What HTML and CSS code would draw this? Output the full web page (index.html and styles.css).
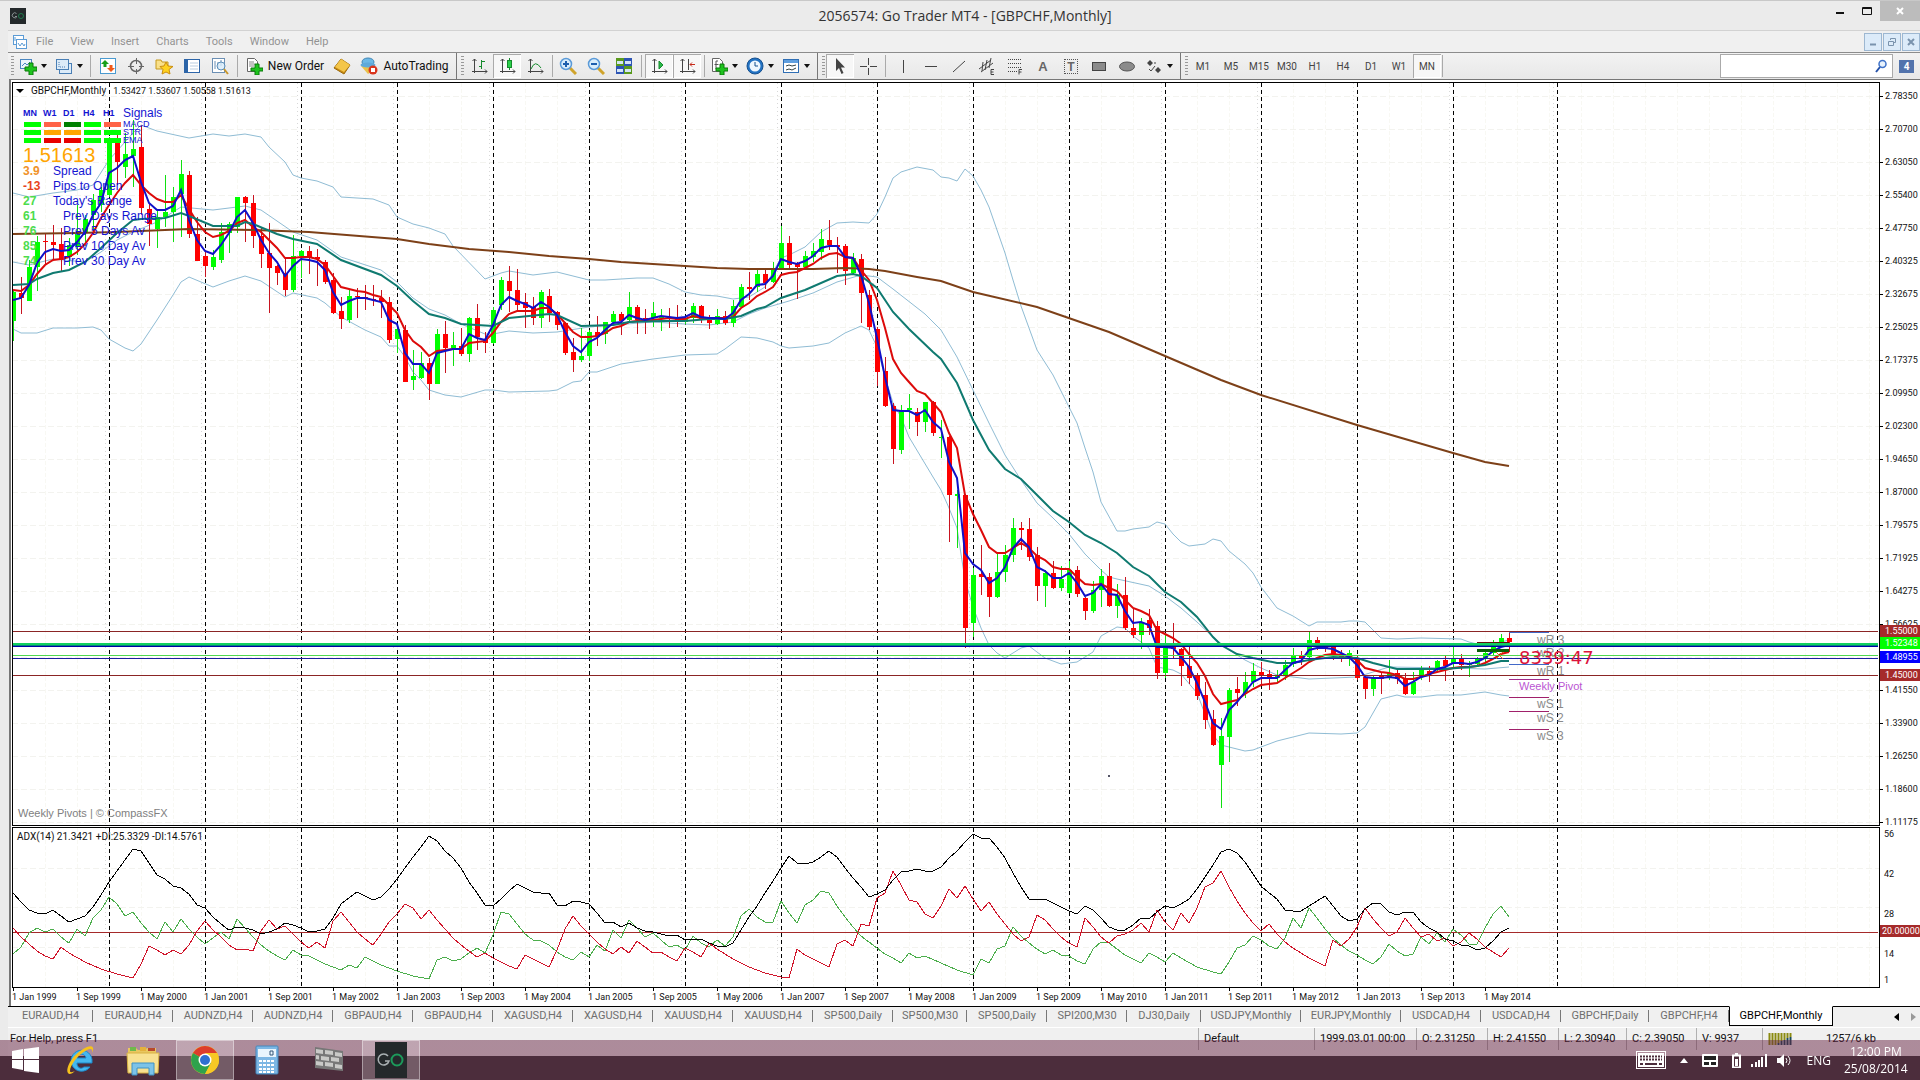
FILE: index.html
```html
<!DOCTYPE html>
<html lang="en">
<head>
<meta charset="utf-8">
<title>2056574: Go Trader MT4 - [GBPCHF,Monthly]</title>
<link rel="stylesheet" href="styles.css">
</head>
<body>
<div class="window">
  <header class="titlebar">
    <svg class="app-icon" width="16" height="16" viewBox="0 0 16 16"><rect width="16" height="16" fill="#24292b"/><path d="M6.500 5.500a2.500 2.500 0 1 0 .5 3H5" fill="none" stroke="#8a9294"/><circle cx="11" cy="8" r="2.500" fill="none" stroke="#1f7a4c"/></svg>
    <h1>2056574: Go Trader MT4 - [GBPCHF,Monthly]</h1>
    <div class="win-buttons">
      <button aria-label="Minimize"><svg width="10" height="10"><rect x="1" y="6" width="8" height="2" fill="#111"/></svg></button>
      <button aria-label="Maximize"><svg width="10" height="10"><path d="M.5 1.500h9v7h-9zM.5 2.500h9" fill="none" stroke="#111"/></svg></button>
      <button class="close" aria-label="Close"><svg width="8" height="8"><path d="M1 1l6 6M7 1l-6 6" stroke="#fff" stroke-width="2"/></svg></button>
    </div>
  </header>

  <nav class="menubar">
    <svg width="16" height="16" viewBox="0 0 16 16" fill="#fff" stroke="#5b9bd5"><rect x="1.500" y="1.500" width="10" height="9"/><rect x="4.500" y="5.500" width="10" height="9"/><path d="M6 9l2 3 2-3 2 3 1-2M3 3v4" fill="none"/></svg>
    <a href="#">File</a><a href="#">View</a><a href="#">Insert</a><a href="#">Charts</a><a href="#">Tools</a><a href="#">Window</a><a href="#">Help</a>
    <div class="mdi">
      <button aria-label="Minimize chart"><svg width="10" height="10"><path d="M2 7.500h6" stroke="#7a93ad" stroke-width="2"/></svg></button>
      <button aria-label="Restore chart"><svg width="10" height="10" fill="none" stroke="#7a93ad"><path d="M3.500 3V1.500h5v4H7M1.500 4.500h5v4h-5z"/></svg></button>
      <button aria-label="Close chart"><svg width="10" height="10"><path d="M2 2l6 6M8 2l-6 6" stroke="#7a93ad" stroke-width="2"/></svg></button>
    </div>
  </nav>

  <div class="toolbar">
    <i class="grip"></i>
    <button class="drop" aria-label="New chart"><svg width="18" height="18"><rect x="1.500" y="2.500" width="11" height="9" fill="#eaf3fb" stroke="#4a86c0"/><path d="M3 9l3-3 2 2 3-3" fill="none" stroke="#4a86c0"/><path d="M10 6h4v4h4v4h-4v4h-4v-4H6v-4h4z" fill="#1ec31e" stroke="#0a7a0a"/></svg></button>
    <button class="drop" aria-label="Profiles"><svg width="18" height="18" fill="#dcebf8" stroke="#4a7fb5"><rect x="4.500" y="6.500" width="12" height="10"/><rect x="1.500" y="2.500" width="12" height="10"/><path d="M4 5v5h7" stroke-dasharray="1 1" fill="none"/></svg></button>
    <i class="sep"></i>
    <button aria-label="Market Watch"><svg width="18" height="18"><rect x="1.500" y="1.500" width="15" height="15" fill="#fff" stroke="#4a9ad0"/><path d="M6 3l4 4H7.500v3h-3V7H2z" fill="#1aa01a"/><path d="M12 15l4-4h-2.500V8h-3v3H8z" fill="#f05a1a"/></svg></button>
    <button aria-label="Data Window"><svg width="18" height="18" fill="none" stroke="#666"><circle cx="9" cy="9" r="5.500" stroke-width="1.500"/><path d="M9.500 1v6M9.500 12v5M1 9.500h6M12 9.500h5"/></svg></button>
    <button aria-label="Navigator"><svg width="18" height="18"><path d="M1 3h5l1 2h6v7H1z" fill="#f9e08a" stroke="#c59a1e"/><path d="M11 5l2 4 5 .5-4 3 1 4.500-4-2-4 2 1-4.500-3-3 4-.5z" fill="#ffd21f" stroke="#c98d10"/></svg></button>
    <button aria-label="Terminal"><svg width="18" height="18"><rect x="1.500" y="2.500" width="15" height="13" fill="#fff" stroke="#2d65a8"/><path d="M2 3h3v12H2z" fill="#2d65a8"/><path d="M7 6h8M7 9h8M7 12h8" stroke="#b9cde0"/></svg></button>
    <button aria-label="Strategy Tester"><svg width="18" height="18"><rect x="1.500" y="1.500" width="12" height="14" fill="#fff" stroke="#6b8fb4"/><path d="M4 4v8M7 5v6M10 3v6" stroke="#6b8fb4"/><circle cx="10" cy="9" r="4" fill="#d7ebfa" fill-opacity=".8" stroke="#5a8db8"/><path d="M13 12l4 5" stroke="#c9962a" stroke-width="2"/></svg></button>
    <i class="sep"></i>
    <button class="labelled"><svg width="18" height="18"><path d="M2.500 1.500h7l3 3v10h-10z" fill="#fff" stroke="#666"/><path d="M4 5h5M4 7h6M4 9h5" stroke="#888"/><path d="M10 7h4v4h4v3h-4v4h-4v-4H6v-3h4z" fill="#1ec31e" stroke="#0a7a0a"/></svg>New Order</button>
    <button aria-label="MetaEditor"><svg width="18" height="18"><path d="M1 11l7-9 9 6-6 9z" fill="#c88a12" stroke="#9b6a0c"/><path d="M2 10l6-8 9 6-6 7z" fill="#f4c64a"/></svg></button>
    <button class="labelled auto"><svg width="18" height="18"><ellipse cx="8" cy="5" rx="6" ry="4" fill="#6cb8e6" stroke="#3f86b5"/><path d="M1 9l7 8 7-5-2-5z" fill="#e9c14b"/><ellipse cx="8" cy="8" rx="7.500" ry="2.500" fill="#5ea9da"/><circle cx="13" cy="13" r="4.500" fill="#d9351d"/><rect x="11" y="11" width="4" height="4" fill="#fff"/></svg>AutoTrading</button>
    <i class="sep edge"></i><i class="grip"></i>
    <button aria-label="Bar Chart"><svg width="18" height="18" fill="none" stroke="#444"><path d="M4.500 2v14M2 14.500h15M2.500 4l2-2 2 2M15 12.500l2 2-2 2"/><path d="M11.500 3v9M9 9.500h2M12 4.500h3" stroke="#158a2c"/></svg></button>
    <button class="pressed" aria-label="Candlesticks"><svg width="18" height="18" fill="none" stroke="#444"><path d="M4.500 2v14M2 14.500h15M2.500 4l2-2 2 2M15 12.500l2 2-2 2"/><path d="M11.500 1v12" stroke="#158a2c"/><rect x="9.500" y="3.500" width="4" height="7" fill="#2ad04a" stroke="#158a2c"/></svg></button>
    <button aria-label="Line Chart"><svg width="18" height="18" fill="none" stroke="#444"><path d="M4.500 2v14M2 14.500h15M2.500 4l2-2 2 2M15 12.500l2 2-2 2"/><path d="M5 12q4-10 10-1" stroke="#158a2c"/></svg></button>
    <i class="sep thin"></i>
    <button aria-label="Zoom In"><svg width="18" height="18"><path d="M11 11l6 6" stroke="#d0a42c" stroke-width="3"/><circle cx="7" cy="7" r="5.500" fill="#d9edfb" stroke="#5a9ad8" stroke-width="1.500"/><path d="M4 7h6M7 4v6" stroke="#1d5fae" stroke-width="2"/></svg></button>
    <button aria-label="Zoom Out"><svg width="18" height="18"><path d="M11 11l6 6" stroke="#d0a42c" stroke-width="3"/><circle cx="7" cy="7" r="5.500" fill="#d9edfb" stroke="#5a9ad8" stroke-width="1.500"/><path d="M4 7h6" stroke="#1d5fae" stroke-width="2"/></svg></button>
    <button aria-label="Tile Windows"><svg width="18" height="18"><path d="M1 1h8v8H1zM9 9h8v8H9z" fill="#5a9a1c"/><path d="M9 1h8v8H9zM1 9h8v8H1z" fill="#2d54b4"/><path d="M2 4h6v3H2zM10 4h6v3h-6zM2 12h6v3H2zM10 12h6v3h-6z" fill="#d5e6f5"/></svg></button>
    <i class="sep"></i>
    <button class="pressed" aria-label="Auto Scroll"><svg width="18" height="18" fill="none" stroke="#444"><path d="M4.500 2v14M2 14.500h15M2.500 4l2-2 2 2M15 12.500l2 2-2 2"/><path d="M9 4l4 4-4 4z" fill="#2ab84a" stroke="#158a2c"/></svg></button>
    <button class="pressed" aria-label="Chart Shift"><svg width="18" height="18" fill="none" stroke="#444"><path d="M4.500 2v14M2 14.500h15M2.500 4l2-2 2 2M15 12.500l2 2-2 2M10.500 2v11"/><path d="M17 7.500h-5m2-2l-2 2 2 2" stroke="#c62a1a"/></svg></button>
    <i class="sep thin"></i>
    <button class="drop" aria-label="Indicators"><svg width="18" height="18"><path d="M2.500 1.500h7l3 3v10h-10z" fill="#fff" stroke="#666"/><path d="M8 4H6v8M4.500 7.500h4" fill="none" stroke="#555"/><path d="M10 7h4v4h4v3h-4v4h-4v-4H6v-3h4z" fill="#1ec31e" stroke="#0a7a0a"/></svg></button>
    <button class="drop" aria-label="Periods"><svg width="18" height="18"><circle cx="9" cy="9" r="8" fill="#2272c3" stroke="#17508e"/><circle cx="9" cy="9" r="5.500" fill="#eef7ff"/><path d="M9 5v4h3" fill="none" stroke="#17508e"/></svg></button>
    <button class="drop" aria-label="Templates"><svg width="18" height="18"><rect x="1.500" y="2.500" width="15" height="13" fill="#fff" stroke="#2f6eb4"/><path d="M2 3h14v3H2z" fill="#5f9fdf"/><path d="M4 9l3-1 3 1 4-1M4 13l3-1 3 1 4-2" fill="none" stroke="#344"/></svg></button>
    <i class="sep edge"></i><i class="grip"></i>
    <button class="pressed" aria-label="Cursor"><svg width="18" height="18"><path d="M5 1v13l3-3 2.500 6 2-1-2.500-5.500h4z" fill="#444"/></svg></button>
    <button aria-label="Crosshair"><svg width="18" height="18"><path d="M9.500 1v7M9.500 11v7M1 9.500h7M11 9.500h7" stroke="#444"/></svg></button>
    <i class="sep"></i>
    <button aria-label="Vertical Line"><svg width="18" height="18"><path d="M9.500 3v13" stroke="#444"/></svg></button>
    <button aria-label="Horizontal Line"><svg width="18" height="18"><path d="M3 9.500h12" stroke="#444"/></svg></button>
    <button aria-label="Trendline"><svg width="18" height="18"><path d="M3 15L15 4" stroke="#444"/></svg></button>
    <button aria-label="Equidistant Channel"><svg width="18" height="18" fill="none" stroke="#444"><path d="M1 12L13 3M3 15l12-9M5 5l-1 9M9 3L7 13M13 1l-2 10"/><path d="M16 12.500h-3v5h3M13 15h2.500"/></svg></button>
    <button aria-label="Fibonacci Retracement"><svg width="18" height="18" fill="none" stroke="#444"><path d="M2 2.500h14M2 6.500h14M2 10.500h14M2 14.500h9" stroke-dasharray="1 1"/><path d="M16 12.500h-3v5M13 15h2.500"/></svg></button>
    <button class="glyph">A</button>
    <button class="glyph boxed"><span>T</span></button>
    <button aria-label="Rectangle"><svg width="18" height="18"><rect x="2.500" y="5.500" width="13" height="8" fill="#8b8b8b" stroke="#444"/></svg></button>
    <button aria-label="Ellipse"><svg width="18" height="18"><ellipse cx="9" cy="9.500" rx="7.500" ry="4.500" fill="#8b8b8b" stroke="#555"/></svg></button>
    <button class="drop" aria-label="Arrows"><svg width="18" height="18" fill="#444"><path d="M5 3l3 3-3 3-3-3zM13 10l3 3-3 3-3-3z"/><path d="M4 12l2 2 4-5M9 6h2" fill="none" stroke="#444"/></svg></button>
    <i class="sep edge"></i><i class="grip"></i>
    <div class="periods"><button>M1</button><button>M5</button><button>M15</button><button>M30</button><button>H1</button><button>H4</button><button>D1</button><button>W1</button><button class="pressed">MN</button></div>
    <i class="sep last"></i>
    <div class="search">
      <input type="text" aria-label="Search">
      <svg width="14" height="14"><path d="M6 8l-4 5" stroke="#2350a8" stroke-width="2"/><circle cx="8.500" cy="5" r="3.500" fill="#e8f2fc" stroke="#3f72c8" stroke-width="1.500"/></svg>
    </div>
    <button class="chat" aria-label="Messages"><span>4</span></button>
  </div>

  <main class="workspace">
    <div class="chart">
      <div class="pane price-pane">
        <svg id="price"></svg>
        <p class="symbol"><i></i><span>GBPCHF,Monthly</span><span class="ohlc">1.53427 1.53607 1.50558 1.51613</span></p>
        <section class="signals">
          <div class="sig-grid">
            <b>MN</b><b>W1</b><b>D1</b><b>H4</b><b>H1</b><span class="sig-title">Signals</span>
            <i class="up"></i><i class="weak"></i><i class="strong"></i><i class="up"></i><i class="weak"></i><span>MACD</span>
            <i class="up"></i><i class="flat"></i><i class="flat"></i><i class="up"></i><i class="up"></i><span>STR</span>
            <i class="up"></i><i class="down"></i><i class="down"></i><i class="up"></i><i class="up"></i><span>EMA</span>
          </div>
          <p class="quote">1.51613</p>
          <dl>
            <div><dt class="c-orange">3.9</dt><dd>Spread</dd></div>
            <div><dt class="c-red">-13</dt><dd>Pips to Open</dd></div>
            <div><dt>27</dt><dd>Today's Range</dd></div>
            <div><dt>61</dt><dd class="in">Prev Days Range</dd></div>
            <div><dt>76</dt><dd class="in">Prev 5 Days Av</dd></div>
            <div><dt>85</dt><dd class="in">Prev 10 Day Av</dd></div>
            <div><dt>74</dt><dd class="in">Prev 30 Day Av</dd></div>
          </dl>
        </section>
        <p class="credit">Weekly Pivots | © CompassFX</p>
      </div>
      <div class="axis price-axis" id="priceAxis">
        <b class="tag brown at-155">1.55000</b><b class="tag lime at-152">1.52348</b><b class="tag blue at-148">1.48955</b><b class="tag brown at-145">1.45000</b>
      </div>
      <div class="pane adx-pane">
        <svg id="adx"></svg>
        <p class="adx-title">ADX(14) 21.3421 +DI:25.3329 -DI:14.5761</p>
      </div>
      <div class="axis adx-axis"><span>56</span><span>42</span><span>28</span><b class="tag brown">20.00000</b><span>14</span><span>1</span></div>
      <div class="dates" id="dates"></div>
    </div>
  </main>

  <nav class="tabs">
    <a href="#" class="first">EURAUD,H4</a><a href="#">EURAUD,H4</a><a href="#">AUDNZD,H4</a><a href="#">AUDNZD,H4</a><a href="#">GBPAUD,H4</a><a href="#">GBPAUD,H4</a><a href="#">XAGUSD,H4</a><a href="#">XAGUSD,H4</a><a href="#">XAUUSD,H4</a><a href="#">XAUUSD,H4</a><a href="#">SP500,Daily</a><a href="#" class="small">SP500,M30</a><a href="#">SP500,Daily</a><a href="#">SPI200,M30</a><a href="#" class="small">DJ30,Daily</a><a href="#" class="wide">USDJPY,Monthly</a><a href="#" class="wide">EURJPY,Monthly</a><a href="#">USDCAD,H4</a><a href="#">USDCAD,H4</a><a href="#" class="mid">GBPCHF,Daily</a><a href="#">GBPCHF,H4</a><a href="#" class="active">GBPCHF,Monthly</a>
    <div class="scroll"><button aria-label="Scroll left"><svg width="5" height="8"><path d="M5 0v8L0 4z"/></svg></button><button aria-label="Scroll right" disabled><svg width="5" height="8"><path d="M0 0v8l5-4z" fill="#999"/></svg></button></div>
  </nav>

  <footer class="status">
    <span class="help">For Help, press F1</span><span>Default</span><span>1999.03.01 00:00</span><span>O: 2.31250</span><span>H: 2.41550</span><span>L: 2.30940</span><span>C: 2.39050</span><span>V: 9937</span>
    <span class="traffic"><svg width="24" height="12"><path d="M1.500 0v12M4.500 0v12M7.500 0v12M10.500 0v10M13.500 0v8M16.500 0v7M19.500 0v5M22.500 0v4" stroke="#8a8a10" stroke-width="2"/><path d="M10.500 10v2M13.500 8v4M16.500 7v5M19.500 5v7M22.500 4v8" stroke="#1c4a5a" stroke-width="2"/></svg>1257/6 kb</span>
  </footer>
</div>

<div class="taskbar">
  <button class="start" aria-label="Start"><svg width="27" height="26" fill="#fff"><path d="M0 4l11-2v10H0zM12 2l15-2v12H12zM0 13h11v10L0 21zM12 13h15v13l-15-2z"/></svg></button>
  <button aria-label="Internet Explorer"><svg width="32" height="32"><path d="M27 18a10.500 10.500 0 1 0-2 5h-6c-4 3-7 0-7-4h15zM12 14c1-5 8-5 9 0z" fill="#45b7ee" stroke="#1d86c8" fill-rule="evenodd"/><path d="M3 29c-3-5 5-20 19-26 5-2 8 0 5 6 1-4-1-5-5-3C12 11 5 22 5 27c0 2 3 1 5 0-3 3-6 4-7 2z" fill="#f6c21c"/></svg></button>
  <button aria-label="File Explorer"><svg width="34" height="32"><path d="M2 4h8l2 2h7l2-2h9v22H2z" fill="#e9c65f"/><path d="M4 3h6v4H4z" fill="#6fb94c"/><path d="M14 3h6v4h-6z" fill="#e4b13c"/><path d="M22 4h7v3h-7z" fill="#b8482c"/><path d="M1 9h32l-1 20H2z" fill="#f8e191" stroke="#d7b244"/><path d="M6 31V19h22v12h-5v-7H11v7z" fill="#7cc3e8" stroke="#3f92c4"/></svg></button>
  <button class="open" aria-label="Google Chrome"><svg width="30" height="30"><circle cx="15" cy="15" r="14" fill="#f7c825"/><path d="M15 15L2.900 8A14 14 0 0 1 27.100 8z" fill="#dd3c2b"/><path d="M2.900 8A14 14 0 0 0 15 29l6-11-6-3z" fill="#2fa24c"/><path d="M15 8h12.100A14 14 0 0 1 15 29l6-11z" fill="#f7c825"/><circle cx="15" cy="15" r="6.500" fill="#fff"/><circle cx="15" cy="15" r="5" fill="#2f6fd0"/></svg></button>
  <button aria-label="Calculator"><svg width="24" height="30"><rect x="1" y="1" width="22" height="28" rx="1" fill="#7db7e4" stroke="#4586bb"/><path d="M3 4h18v8H3z" fill="#e9f5fd"/><path d="M15 6h3v4h-3z" fill="none" stroke="#357"/><path d="M4 16h16M4 20h16M4 24h16M4 27h16" stroke="#fff" stroke-width="2" stroke-dasharray="3 1"/></svg></button>
  <button aria-label="Firewall"><svg width="32" height="28"><path d="M2 1l28 4v20L2 22z" fill="#777"/><path d="M3 3l7 1v4l-7-1zM12 4l8 1v4l-8-1zM22 6l7 1v4l-7-1zM3 9l3 .500v4L3 13zM8 10l8 1v4l-8-1zM18 11l8 1v4l-8-1zM3 15l7 1v4l-7-1zM12 16l8 1v4l-8-1zM22 18l7 1v4l-7-1z" fill="#c9c9c7"/></svg></button>
  <button class="open go" aria-label="Go Trader"><svg width="32" height="36"><rect width="32" height="36" fill="#24292b"/><path d="M13 14a5.500 5.500 0 1 0 1 5h-4" fill="none" stroke="#a9b0b2" stroke-width="1.500"/><circle cx="22" cy="18" r="5.500" fill="none" stroke="#1c9a5b" stroke-width="2"/></svg></button>
  <div class="tray">
    <svg class="keys" width="30" height="18"><rect x=".5" y=".5" width="29" height="17" fill="none" stroke="#fff"/><rect x="2" y="2" width="26" height="14" fill="#fff"/><path d="M4 5.500h22M4 8.500h22" stroke="#4c2d3c" stroke-width="2" stroke-dasharray="2 1"/><path d="M4 13h3M9 13h12M23 13h3" stroke="#4c2d3c" stroke-width="2"/></svg>
    <svg class="keys" width="8" height="5"><path d="M0 5l4-5 4 5z" fill="#fff"/></svg>
    <svg class="keys" width="16" height="13"><rect width="16" height="13" rx="1" fill="#fff"/><path d="M2 2h12v4H2zM2 8h5v3H2zM9 8h5v3H9z" fill="#222"/></svg>
    <svg width="9" height="15"><path d="M1 2.500h7v12H1zM3 1h3" fill="none" stroke="#fff" stroke-width="2"/><path d="M3 6h3v7H3z" fill="#fff"/></svg>
    <svg width="16" height="13" fill="#fff"><path d="M0 10h2v3H0zM4 8h2v5H4zM7 6h2v7H7zM10 3h2v10h-2zM14 0h2v13h-2z"/></svg>
    <svg width="15" height="15"><path d="M0 5h3l4-4v13l-4-4H0z" fill="#fff"/><path d="M9 5q2 2.500 0 5M11 3q4 4.500 0 9" fill="none" stroke="#fff"/></svg>
    <span class="lang">ENG</span>
    <time class="clock"><span>12:00 PM</span><span>25/08/2014</span></time>
  </div>
</div>
<script src="chart.js"></script>
</body>
</html>
```
FILE: styles.css
```css
* { box-sizing: border-box; }
body { margin: 0; background: #ebebeb; font-family: Roboto, "Noto Sans", sans-serif; font-size: 11px; color: #111; overflow: hidden; }
p, h1, dl, dd { margin: 0; }
button { border: 0; padding: 0; background: none; font: inherit; color: inherit; display: flex; align-items: center; justify-content: center; }
a { color: inherit; text-decoration: none; }
svg { display: block; flex: none; }

.window { position: relative; min-height: 100vh; border-top: 1px solid #c8c8c8; }

.titlebar { display: flex; align-items: center; height: 29px; padding-left: 10px; }
.titlebar h1 { flex: 1; text-align: center; font: 400 14px "Open Sans", "Noto Sans", sans-serif; color: #333; padding-left: 78px; }
.win-buttons { display: flex; align-self: flex-start; }
.win-buttons button { width: 27px; height: 20px; }
.win-buttons .close { width: 40px; background: #bcbcbc; justify-content: center; }

.menubar { display: flex; align-items: center; height: 22px; margin-left: 8px; padding-left: 4px; border-top: 1px solid #d2d2d2; background: #f0f0f0; color: #939393; }
.menubar svg + a { margin-left: 8px; }
.menubar a { margin-right: 17px; }
.mdi { display: flex; gap: 1px; margin-left: auto; }
.mdi button { width: 18px; height: 18px; border: 1px solid #9db7d1; background: #dcebf9; }

.toolbar { display: flex; align-items: center; height: 27px; margin-left: 8px; border-top: 1px solid #8c8c8c; background: linear-gradient(#f2f2f2, #e8e8e8); }
.toolbar > button, .periods button { width: 28px; height: 24px; flex: none; }
.toolbar .drop { width: 36px; gap: 4px; }
.drop::after { content: ""; border: 3px solid transparent; border-top: 4px solid #111; border-bottom: 0; }
.toolbar .labelled { width: 87px; gap: 5px; font-size: 12px; }
.toolbar .auto { width: 97px; }
.toolbar .pressed, .periods .pressed { background: #f7f7f7; box-shadow: inset 1px 1px #aaa, inset -1px -1px #fff; }
.grip { width: 7px; height: 20px; flex: none; background: repeating-linear-gradient(#999 0 1px, transparent 1px 3px) 3px 0 / 3px 100% no-repeat; }
.sep { width: 7px; height: 22px; flex: none; background: linear-gradient(#aaa, #aaa) 3px 0 / 1px 100% no-repeat; }
.sep.thin { width: 5px; }
.sep.edge { width: 5px; height: 26px; background-image: linear-gradient(#777, #777); }
.sep.last { width: 3px; background-position: 1px 0; }
.toolbar > .glyph { font: bold 13px "Liberation Sans", sans-serif; color: #666; }
.boxed span { width: 14px; height: 15px; line-height: 14px; border: 1px dotted #555; font-size: 12px; }
.periods { display: flex; font-size: 10px; color: #444; }
.search { display: flex; align-items: center; width: 173px; height: 24px; margin-left: auto; padding-right: 4px; border: 1px solid #aaa; background: #fff; }
.search input { flex: 1; min-width: 0; border: 0; outline: 0; background: none; }
.toolbar .chat { width: 27px; }
.chat span { width: 15px; height: 13px; line-height: 13px; background: #5273ac; color: #fff; font-size: 10px; font-weight: 700; }

.workspace { margin-left: 9px; border-left: 2px solid #777; border-top: 1px solid #777; background: #fff; padding: 2px 0 0 1px; }
.chart { display: grid; grid-template-columns: 1fr 40px; font-size: 9px; line-height: 12px; }
.pane { position: relative; border: 1px solid #000; overflow: hidden; min-width: 0; }
.pane > svg { width: 100%; }
.price-pane { height: 744px; }
.price-pane > svg { height: 742px; }
.adx-pane { height: 161px; margin-top: 1px; }
.adx-pane > svg { height: 159px; }
.symbol, .adx-title, .credit, .signals { position: absolute; }
.symbol { left: 3px; top: 2px; display: flex; gap: 7px; align-items: center; font-size: 10px; }
.symbol i { border: 4px solid transparent; border-top-color: #000; border-bottom: 0; }
.symbol .ohlc { font-size: 9px; }
.adx-title { left: 4px; top: 3px; font-size: 10px; }
.credit { left: 5px; bottom: 5px; font: 11px/14px "Liberation Sans", sans-serif; color: #808080; }

.signals { left: 10px; top: 23px; font-family: "Liberation Sans", sans-serif; font-size: 12px; color: #1414d2; }
.sig-grid { display: grid; grid-template-columns: repeat(5, 20px) auto; grid-template-rows: 14px repeat(3, 8px); align-items: center; justify-items: start; font-size: 9px; line-height: 8px; }
.sig-grid i { width: 17px; height: 5px; margin-left: 1px; }
.sig-grid .sig-title { font-size: 12px; }
.up { background: #0f0; } .weak { background: #ff6347; } .strong { background: #008000; } .flat { background: #ffa500; } .down { background: #e80000; }
.quote { font-size: 20px; line-height: 22px; color: #ffa500; }
.signals dl { margin-top: -2px; }
.signals dl div { display: flex; height: 15px; line-height: 15px; }
.signals dt { width: 30px; font-weight: 700; color: #4ddc4d; }
.signals .c-orange { color: #f0922a; }
.signals .c-red { color: #e8431c; }
.signals .in { padding-left: 10px; }

.axis { position: relative; display: flex; flex-direction: column; }
.axis span { position: relative; flex: none; height: 33px; padding-left: 5px; }
.price-axis { height: 744px; padding-top: 8px; }
.axis span:last-child { height: 12px; }
.price-axis span::before { content: ""; position: absolute; left: 0; top: 6px; width: 3px; border-top: 1px solid #000; }
.tag { position: absolute; left: 0; right: 0; height: 12px; padding-left: 5px; color: #fff; font-weight: 400; }
.brown { background: #a52a2a; } .lime { background: #0f0; } .blue { background: #00f; }
.at-155 { top: 543px; } .at-152 { top: 555px; } .at-148 { top: 569px; } .at-145 { top: 587px; }
.adx-axis { height: 162px; padding-top: 2px; }
.adx-axis span { height: 40px; padding-left: 4px; }
.adx-axis span:nth-of-type(4) { height: 26px; }
.adx-axis .tag { top: 99px; padding-left: 2px; }
.dates { grid-column: 1 / -1; display: flex; height: 18px; overflow: hidden; padding-top: 3px; }
.dates span { position: relative; width: 64px; flex: none; white-space: nowrap; }
.dates span::before { content: ""; position: absolute; left: 1px; top: -3px; height: 3px; border-left: 1px solid #000; }

.tabs { position: relative; display: flex; height: 21px; margin-left: 8px; border-top: 1px solid #000; background: #f0f0f0; color: #6e6e6e; font-size: 11px; line-height: 18px; }
.tabs a { width: 80px; flex: none; text-align: center; white-space: nowrap; background: linear-gradient(#777, #777) right 3px / 1px 12px no-repeat; }
.tabs .first { width: 85px; }
.tabs .small { width: 74px; }
.tabs .mid { width: 88px; }
.tabs .wide { width: 100px; }
.tabs .active { width: 104px; height: 20px; margin-top: -1px; background: #fff; color: #000; border: 1px solid #000; border-top-color: #fff; }
.scroll { display: flex; gap: 12px; margin: 0 4px 0 auto; }

.status { display: grid; grid-template-columns: 1fr 116px 102px 71px 71px 68px 70px 66px 158px; height: 53px; margin-left: 8px; border-top: 1px solid #fff; background: #f0f0f0; line-height: 22px; }
.status span { height: 22px; padding-left: 5px; border-left: 1px solid #b0b0b0; white-space: nowrap; }
.status .help { padding-left: 2px; border: 0; }
.status .traffic { display: flex; gap: 34px; align-items: center; }

.taskbar { position: fixed; left: 0; right: 0; bottom: 0; display: flex; height: 40px; color: #fff; background: linear-gradient(rgba(100, 30, 62, .48) 16px, #4c2d3c 16px); }
.taskbar > button { width: 58px; margin-right: 4px; }
.taskbar > .start { width: 50px; margin-right: 2px; }
.taskbar .open { background: rgba(255, 255, 255, .22); border: 1px solid rgba(255, 255, 255, .4); }
.tray { display: flex; align-items: center; margin-left: auto; gap: 10px; padding-right: 16px; font: 12px "Open Sans", sans-serif; }
.tray .keys { margin-right: 4px; }
.lang { margin: 0 3px 0 5px; }
.clock { display: grid; justify-items: center; line-height: 17px; width: 60px; white-space: nowrap; }
```
FILE: chart.js
```js
// Each bar is 8px wide; the first one sits at x = 13 in window coordinates.
const barX = n => 13 + 8 * n;
const fromList = s => s.trim().split(/\s+/).map((y, n) => [n, +y]);
const fromPairs = s => s.trim().split(/\s+/).map(p => p.split(':').map(Number));
const line = (pts, color, width, extra = '') =>
  `<polyline points="${pts.map(([n, y]) => barX(n) + ',' + y).join(' ')}" fill="none" stroke="${color}" stroke-width="${width}" ${extra}/>`;
const hline = (y, color, width) => `<rect x="12" y="${y}" width="100%" height="${width}" fill="${color}"/>`;

// colour, high, body top, body bottom, low
const candles = `g 290 292 321 341,r 277 293 298 314,g 260 267 301 301,g 236 242 267 291,r 233 241 242 265,r 225 242 245 260,r 228 244 260 272,g 238 245 257 266,g 205 233 247 255,g 215 219 233 246,g 194 200 215 232,g 187 190 205 212,g 137 140 195 197,r 133 143 162 185,g 133 154 167 178,g 120 149 156 187,
r 125 147 208 215,r 203 209 224 246,g 210 217 229 248,g 175 212 217 227,g 187 197 212 242,g 160 174 194 237,r 171 175 234 238,r 217 234 261 261,r 250 256 266 277,g 250 257 267 270,g 223 232 260 263,g 222 224 233 253,g 197 197 227 233,r 196 197 203 242,r 195 203 236 248,r 227 236 254 268,
r 223 253 268 313,r 265 266 273 285,r 257 273 290 296,g 235 256 290 292,g 250 251 256 278,r 246 251 257 274,r 249 257 259 286,r 260 262 282 284,r 273 280 313 314,r 297 311 319 329,g 290 296 320 323,r 288 296 297 318,r 285 297 298 310,r 285 299 300 306,r 290 298 302 318,r 297 302 340 343,
g 325 329 339 353,r 325 330 382 382,g 350 376 380 390,g 352 363 378 379,r 358 363 384 400,g 329 334 384 384,r 321 334 348 373,g 332 345 348 366,r 328 346 354 356,g 317 318 354 362,r 304 318 337 350,r 332 339 343 353,
g 307 310 343 344,g 277 280 305 310,r 266 281 291 312,r 269 290 305 312,r 293 302 308 328,r 297 307 318 325,g 290 292 318 328,r 289 296 313 322,r 311 312 325 330,r 322 323 353 355,r 338 352 360 372,g 328 356 360 362,g 330 332 356 361,r 316 332 337 346,g 322 322 334 344,g 311 314 322 324,
r 312 314 321 335,g 292 307 320 323,r 305 307 320 334,r 309 318 320 334,g 302 313 318 327,g 309 316 318 331,r 308 317 319 328,r 305 318 322 327,g 317 318 322 324,g 303 306 318 323,r 305 306 319 323,r 315 318 323 329,g 309 316 324 325,r 311 316 323 325,g 300 306 323 327,g 284 287 307 308,
r 272 287 289 300,g 270 274 287 292,r 270 274 283 289,g 262 269 282 283,g 226 243 268 270,r 236 243 265 270,r 262 263 267 299,g 251 256 267 270,g 243 251 257 262,g 229 239 252 260,r 220 240 245 250,r 237 245 247 273,r 244 246 271 285,g 253 258 273 274,r 254 259 293 323,r 290 295 327 330,
r 327 329 372 386,r 357 371 406 407,r 403 406 449 464,g 405 410 450 454,g 394 408 410 429,r 408 412 422 436,g 402 402 422 432,r 401 402 433 436,g 420 437 438 458,r 436 437 495 542,g 490 494 496 548,r 494 495 628 648,g 568 575 623 637,r 545 574 577 595,r 573 577 597 617,g 553 572 597 598,
g 545 555 572 582,g 518 528 555 562,r 522 528 530 550,r 518 529 557 561,r 547 555 586 601,g 570 573 586 607,r 561 573 588 589,g 566 579 588 591,g 561 570 593 594,r 566 570 594 597,r 597 598 611 620,g 581 590 611 613,g 569 576 590 607,r 563 576 606 607,g 584 595 606 618,r 577 595 628 630,
r 608 628 635 638,g 618 622 635 649,r 609 620 628 635,r 621 626 673 679,g 635 647 673 678,r 623 645 649 658,r 648 649 666 686,r 645 666 678 684,r 673 676 696 700,r 682 695 720 729,r 710 719 745 746,g 718 736 765 808,g 688 690 737 762,r 677 689 693 706,g 672 682 693 698,g 663 671 682 687,
r 662 672 675 684,r 670 674 678 690,g 670 675 678 683,g 660 665 675 680,g 648 656 664 667,r 651 656 658 665,g 632 640 657 658,r 637 640 643 650,r 643 645 648 652,r 645 646 655 660,r 650 654 658 662,g 650 653 657 666,r 656 658 678 680,r 675 677 689 699,g 675 678 689 696,r 672 676 679 694,
g 660 673 677 680,r 668 673 679 684,r 673 678 694 695,g 672 682 694 695,g 666 670 677 680,r 666 671 674 682,g 660 661 668 671,r 656 660 666 681,g 647 658 663 667,r 654 658 665 670,g 661 663 665 677,g 657 659 664 667,g 650 653 659 662,g 640 645 653 655,g 634 638 642 645,r 632 638 642 652`
  .split(',').map(s => s.trim().split(' '));

const fast = fromList(`300 298 285 263 252 249 251 250 242 232 215 203 173 168 160 156 182 203 210 210 206 190 220 240 251 254 245 233 217 210 223 240 253 262 276 266 259 260 262 270 292 305 301 298 298 300 302 320 324 353 364 364 373 353 351 349 349 334 338 340
325 305 297 301 304 308 302 307 315 332 346 352 342 338 330 323 322 315 318 320 318 316 317 318 317 313 317 318 318 319 313 300 294 285 284 276 259 262 264 261 256 248 246 246 257 258 275 303 338 377 410 411 411 415 410 422 429 462 478 553
564 570 583 578 567 548 539 547 567 571 578 578 573 583 596 593 584 594 595 611 623 622 625 647 647 648 657 667 683 702 723 729 710 702 692 682 678 678 678 670 663 661 650 648 648 649 653 657 665 677 678 678 677 678 686 682 677 675 669 667 663 663 664 662 658 651 647 645`);
const slow = fromList(`290 291 285 274 265 260 259 257 252 244 233 218 205 193 183 175 185 193 199 202 202 195 209 222 232 237 235 231 223 220 227 232 240 248 258 258 257 257 259 265 276 287 289 291 292 295 297 305 313 330 341 347 356 351 350 349 349 343 342 341
333 322 314 311 311 311 308 308 314 323 332 337 337 336 333 328 326 322 321 321 320 319 318 319 319 316 318 318 318 318 317 308 303 296 292 287 275 273 272 268 264 258 254 253 257 258 270 280 300 328 359 373 382 391 394 403 412 433 448 495
514 530 547 553 553 548 543 548 556 560 567 569 569 577 584 585 584 588 591 600 608 611 615 630 634 638 644 654 663 676 694 704 702 700 694 689 685 684 683 678 673 668 662 658 655 654 655 656 660 668 670 672 673 675 679 679 677 674 672 670 668 667 667 666 663 659 654 652`);
const teal = fromPairs(`0:285 2:284 3:279 4:276 5:273 7:270 9:262 11:248 13:233 15:220 16:219 19:218 21:213 22:216 25:226 28:226 29:222 30:224 33:234 35:239 38:244 41:260 46:275 48:286 50:301 52:314 54:318 56:324 58:325 60:326 62:318 67:314 68:315 71:326 75:325 77:322 81:321 84:321 87:319 89:319 91:316 93:309 94:307 96:298 99:290 103:276 105:274 106:276 108:288 110:312 112:329 115:352 116:359 118:383 120:420 122:450 124:469 126:479 128:495 130:511 132:522 134:535 136:543 138:553 140:567 142:576 144:592 146:602 148:617 150:637 151:645 153:654 155:658 158:663 160:663 162:660 165:657 168:658 170:663 173:669 176:669 179:669 182:667 184:665 185:663 186:661 187:661`);
const brown = fromPairs(`0:234 8:233 13:232 22:229 30:230 37:232 48:239 52:244 57:249 62:252 67:256 72:259 76:262 84:266 88:268 92:269 100:269 104:268 107:269 109:271 113:277 116:281 120:292 128:307 137:332 144:356 151:380 156:395 168:425 180:453 184:462 187:466`);
const bandTop = fromPairs(`0:193 2:197 5:193 8:190 10:185 12:160 15:133 16:125 18:131 22:138 25:134 27:136 29:134 31:137 32:147 34:162 35:175 36:178 38:181 40:187 41:197 45:199 47:205 48:217 50:224 52:228 54:234 55:246 59:279 61:273 62:271 65:275 68:272 72:280 74:280 78:278 80:278 82:284 84:292 86:295 88:296 90:299 92:297 94:287 95:272 96:258 97:255 99:247 101:232 103:223 105:222 107:223 108:214 109:197 110:178 111:172 113:167 115:170 116:177 117:178 118:181 119:169 120:176 121:190 122:207 123:230 124:253 125:280 126:306 128:350 130:375 132:407 133:423 134:448 135:472 136:502 138:531 139:531 140:529 142:527 143:522 144:524 145:534 146:542 147:546 149:544 150:539 151:541 152:551 154:564 155:573 156:587 158:608 160:616 162:626 163:622 166:622 167:621 168:621 169:622 171:638 173:639 176:638 181:639 182:642 184:646 187:640`);
const bandMid = fromPairs(`0:262 2:265 5:259 9:262 11:252 13:240 15:232 18:222 21:207 25:210 29:206 31:210 33:221 35:232 38:240 41:257 46:270 48:282 50:298 52:309 54:315 56:324 59:334 60:334 62:331 65:333 68:332 72:327 75:325 80:322 84:324 87:325 90:322 92:314 94:308 97:301 100:293 103:282 106:275 108:277 110:289 114:314 116:330 118:357 120:390 122:423 124:455 126:480 128:503 130:518 132:534 134:554 136:570 137:577 138:579 142:586 144:596 146:608 148:622 150:637 152:650 154:660 156:668 158:675 160:677 162:679 165:678 168:677 172:667 180:668 184:669 187:667`);
const bandLow = fromPairs(`0:329 1:333 3:333 5:328 8:328 10:327 11:330 12:339 14:348 15:351 16:344 18:320 20:295 21:282 22:277 25:287 27:281 29:276 31:281 34:297 35:293 38:298 39:303 41:317 44:330 46:337 47:346 48:346 49:357 50:372 51:380 52:390 54:395 56:397 59:390 60:390 62:392 67:391 68:390 70:382 71:381 72:372 73:372 76:364 80:359 84:355 88:354 89:349 91:337 93:338 95:342 96:346 97:348 100:346 102:343 104:333 106:326 107:330 108:347 109:377 110:403 111:417 112:437 115:477 116:490 117:508 118:528 119:580 120:607 121:628 122:645 123:653 124:658 126:648 127:646 129:658 131:664 133:662 135:652 136:636 138:627 139:628 140:636 142:648 143:667 145:670 146:674 148:693 150:735 151:745 154:751 155:750 156:747 158:741 162:733 166:734 168:733 169:727 170:713 171:699 173:695 174:697 176:697 178:695 181:695 184:692 186:695 187:696`);

const adx = fromPairs(`0:893 1:902 2:910 3:913 4:914 5:910 6:916 7:922 8:919 9:916 10:907 11:895 12:882 13:871 14:860 15:849 16:851 17:863 18:875 19:879 20:886 21:888 22:894 23:905 24:908 25:917 26:924 27:930 28:927 29:928 30:930 31:934 32:932 33:929 34:923 35:925 36:928 37:932 38:931 39:929 40:918 41:904 42:898 43:892 44:896 45:900 46:897 47:889 48:879 49:868 50:857 51:847 52:836 53:841 54:851 55:858 56:868 57:882 58:893 59:905 60:906 61:899 62:891 63:884 64:888 65:892 66:893 67:893 68:905 69:906 70:901 71:902 72:904 73:913 74:923 75:922 76:927 77:923 78:928 79:931 80:932 82:936 83:935 84:940 85:939 86:939 87:943 88:946 89:947 90:943 91:930 92:917 93:906 94:893 95:881 96:868 97:856 98:863 99:864 100:862 101:857 102:851 103:857 104:868 105:878 106:887 107:897 108:894 109:890 110:880 111:872 112:871 113:869 114:871 115:871 116:867 117:858 118:851 119:842 120:834 121:838 122:838 123:847 124:858 125:873 126:887 127:899 129:899 130:903 132:911 133:914 134:906 135:910 136:918 137:927 138:930 139:930 140:925 141:918 142:919 143:912 144:906 145:908 146:904 147:899 148:889 149:877 150:865 151:852 152:849 153:853 154:862 155:874 156:886 157:893 158:899 159:910 160:911 161:911 162:906 163:901 164:896 165:906 166:916 167:921 168:919 169:909 170:903 171:904 172:912 173:915 174:912 175:912 176:922 177:928 178:932 179:939 180:941 181:945 182:946 183:950 184:948 185:941 186:932 187:928`);
const plusDI = fromPairs(`0:954 1:947 2:933 3:928 4:932 5:929 6:937 7:943 8:929 9:936 10:918 11:910 12:897 13:904 14:916 15:912 16:923 17:932 18:939 19:922 20:932 21:919 22:929 23:937 24:944 25:938 26:932 27:939 28:919 29:928 30:937 31:945 32:951 33:956 34:960 35:950 36:955 37:956 38:960 39:964 40:967 41:970 42:965 43:968 44:957 46:965 48:971 50:976 52:979 53:960 54:957 55:961 56:959 57:953 58:948 59:953 60:935 61:912 62:914 63:924 64:934 65:940 66:941 67:945 68:952 69:957 70:960 71:952 72:957 73:945 74:951 75:930 76:938 77:920 78:928 79:937 80:933 81:940 82:947 83:945 84:950 85:936 86:943 87:947 88:940 89:946 90:937 91:916 92:909 93:917 94:922 95:922 96:901 97:913 98:923 99:905 100:900 101:891 102:893 103:906 104:917 105:927 106:936 107:942 108:948 109:954 110:958 111:963 112:953 113:958 114:956 116:963 118:970 120:975 121:959 122:963 123:949 124:946 125:927 126:936 127:943 128:949 129:954 130:950 131:955 132:956 133:961 134:964 135:949 136:942 137:943 138:949 139:955 140:959 141:963 142:953 143:957 144:962 145:953 146:958 148:967 150:972 151:974 152:962 153:948 154:945 155:936 156:940 157:946 158:949 159:938 160:918 161:928 162:908 163:918 164:929 165:938 166:945 167:951 168:955 169:960 170:964 171:957 172:944 173:951 174:956 175:954 176:937 177:944 178:933 179:942 180:929 181:935 182:944 183:944 184:928 185:914 186:906 187:917`);
const minusDI = fromPairs(`0:928 1:937 2:944 3:951 4:956 5:959 6:947 7:953 9:962 11:969 13:974 15:978 16:964 17:946 18:950 19:955 20:950 21:954 22:945 23:931 24:921 25:930 26:937 27:945 28:950 29:949 30:951 31:931 32:920 33:929 34:926 35:934 36:942 37:948 38:942 39:948 40:921 41:912 42:922 43:932 44:939 45:945 46:934 47:922 48:914 49:904 50:908 51:919 52:910 53:920 54:929 55:938 56:945 57:951 58:957 59:953 60:958 61:962 62:966 63:969 64:955 66:963 67:967 68:950 69:929 70:916 71:926 72:934 73:942 74:949 75:954 76:947 77:953 78:941 79:947 80:953 81:952 82:957 83:961 84:948 85:952 86:957 87:943 88:949 90:959 92:967 94:973 96:977 97:978 98:949 99:955 101:963 102:967 103:944 104:940 105:946 106:924 107:926 108:898 109:893 110:871 111:885 112:900 113:902 114:914 115:918 116:906 117:889 118:898 119:886 120:899 121:911 122:902 123:914 124:924 125:934 126:941 127:937 128:915 129:920 130:929 131:937 132:943 133:947 134:918 135:927 136:937 137:943 138:936 139:934 140:930 141:923 142:932 143:910 144:922 145:930 146:913 147:923 148:908 149:887 150:883 151:871 152:887 153:901 154:913 155:923 156:931 157:924 158:934 159:942 160:948 161:953 162:958 164:966 165:940 166:946 167:939 168:927 169:908 170:919 171:928 172:936 173:932 174:918 175:928 176:937 177:934 178:941 179:938 180:946 181:942 182:933 183:939 184:947 185:952 186:957 187:948`);

function grid(top, bottom, rows) {
  let s = '';
  for (let x = 45; x < 4000; x += 32) s += `<path d="M${x}.5 ${top}V${bottom}" stroke="#f8f8f3" stroke-dasharray="4 2"/>`;
  for (const y of rows) s += `<line x1="12" x2="110%" y1="${y}.5" y2="${y}.5" stroke="#f3f3ef" stroke-dasharray="6 3"/>`;
  for (let k = 0; k < 16; k++) {
    const x = k < 15 ? 109 + 96 * k : 1557;
    s += `<path d="M${x - 4}.5 ${top}V${bottom}" stroke="#d8d8d8" stroke-dasharray="1 3"/><path d="M${x}.5 ${top}V${bottom}" stroke="#000" stroke-dasharray="4 3"/>`;
  }
  return s;
}

const label = (x, y, text, color, cls) => `<text x="${x}" y="${y}" fill="${color}" ${cls}>${text}</text>`;
const small = 'font-family="Liberation Sans, sans-serif" font-size="12"';
const priceRows = Array.from({ length: 23 }, (_, i) => 96 + 33 * i);

let s = '<g transform="translate(-13,-83)">' + grid(83, 826, priceRows);
for (const b of [bandTop, bandMid, bandLow]) s += line(b, '#8fbcd4', 1);
candles.forEach(([c, hi, top, bot, lo], n) => {
  const fill = c === 'g' ? '#0f0' : '#f00', wick = c === 'g' ? '#10e010' : '#c81420', x = barX(n);
  s += `<rect x="${x}" y="${hi}" width="1" height="${lo - hi}" fill="${wick}"/><rect x="${x - 2}" y="${top}" width="5" height="${Math.max(1, bot - top)}" fill="${fill}"/>`;
});
s += line(brown, '#7d4018', 2) + line(slow, '#dc0a0a', 2) + line(teal, '#0f7a70', 2) + line(fast, '#1010c8', 2);
s += hline(631, '#8b2525', 1) + hline(643, '#10d060', 2) + hline(645, '#088080', 1) + hline(646, '#0000a8', 1) + hline(655, '#50d850', 1) + hline(658, '#1c1ca0', 1) + hline(675, '#8b2525', 1);
s += '<path d="M1477 650.500h32" stroke="#086008" stroke-width="3"/><path d="M1477 642.500h32" stroke="#601010"/><path d="M1496 652l7 7m0-7l-7 7" stroke="#e0601a"/><rect x="1108" y="775" width="2" height="2" fill="#556"/>';
for (const [y, c] of [[632, '#4169c8'], [664, '#4169c8'], [679, '#a02a8a'], [697, '#a0206a'], [711, '#a0206a'], [729, '#a0206a']]) s += `<path d="M1509 ${y}.5h40" stroke="${c}"/>`;
s += label(1537, 644, 'wR 3', '#8a8a8a', small) + label(1537, 657, 'wR 2', '#8a8a8a', small) + label(1537, 675, 'wR 1', '#8a8a8a', small);
s += label(1537, 708, 'wS 1', '#8a8a8a', small) + label(1537, 722, 'wS 2', '#8a8a8a', small) + label(1537, 740, 'wS 3', '#8a8a8a', small);
s += label(1519, 690, 'Weekly Pivot', '#ba55d3', 'font-family="Liberation Sans, sans-serif" font-size="11"');
s += label(1519, 664, '8339:47', '#dc143c', 'font-family="DejaVu Sans, sans-serif" font-size="18"');
document.getElementById('price').innerHTML = s + '</g>';

document.getElementById('adx').innerHTML = '<g transform="translate(-13,-828)">' + grid(828, 987, [868, 907, 947]) +
  hline(932, '#a52a2a', 1) + line(plusDI, '#4cae4c', 1, 'shape-rendering="crispEdges"') + line(minusDI, '#d0142a', 1, 'shape-rendering="crispEdges"') + line(adx, '#000', 1, 'shape-rendering="crispEdges"') + '</g>';

const prices = '2.78350 2.70700 2.63050 2.55400 2.47750 2.40325 2.32675 2.25025 2.17375 2.09950 2.02300 1.94650 1.87000 1.79575 1.71925 1.64275 1.56625 1.48975 1.41550 1.33900 1.26250 1.18600 1.11175';
document.getElementById('priceAxis').insertAdjacentHTML('afterbegin', prices.split(' ').map(p => `<span>${p}</span>`).join(''));

let dates = '';
for (let m = 0; m < 188; m += 8) dates += `<span>1 ${['Jan', 'May', 'Sep'][m % 12 / 4]} ${1999 + Math.floor(m / 12)}</span>`;
document.getElementById('dates').innerHTML = dates;
```
